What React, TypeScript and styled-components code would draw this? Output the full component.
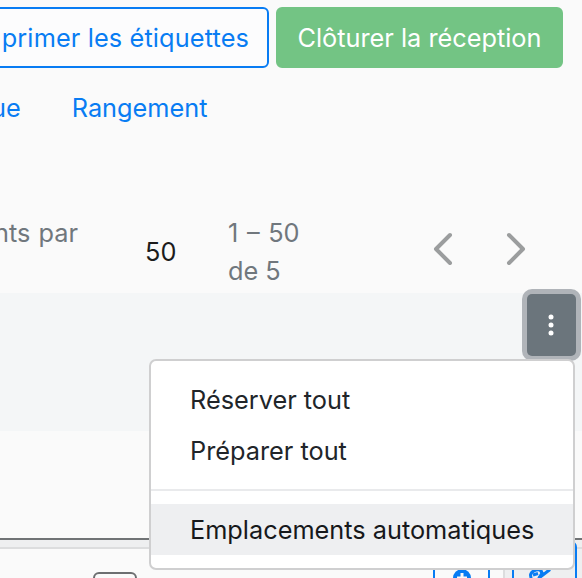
import React from "react";
import styled, { createGlobalStyle } from "styled-components";

const GlobalStyle = createGlobalStyle`
  * { box-sizing: border-box; }
  body { margin: 0; background: #fafafa; }
`;

const Page = styled.main`
  position: relative;
  width: 582px;
  height: 578px;
  overflow: hidden;
  display: flex;
  flex-direction: column;
  background: #fafafa;
  color: #212529;
  font: 430 25.3px/38px Inter, sans-serif;
  white-space: nowrap;
`;

const Actions = styled.header`
  display: flex;
  justify-content: flex-end;
  gap: 7px;
  height: 68px;
  padding: 7px 19px 0 0;
`;

const Button = styled.button<{ $kind: "outline" | "success" }>`
  flex: none;
  display: flex;
  align-items: center;
  justify-content: ${(p) => (p.$kind === "outline" ? "flex-end" : "center")};
  width: ${(p) => (p.$kind === "outline" ? 300 : 287)}px;
  height: 61px;
  padding: 0 ${(p) => (p.$kind === "outline" ? 18 : 0)}px;
  border: 2px solid ${(p) => (p.$kind === "outline" ? "#087cf3" : "#73c484")};
  border-radius: 6px;
  background: ${(p) => (p.$kind === "outline" ? "#fcfcfd" : "#73c484")};
  color: ${(p) => (p.$kind === "outline" ? "#087cf3" : "#fff")};
  font: inherit;
  letter-spacing: ${(p) => (p.$kind === "outline" ? 0.13 : 0)}px;
`;

const Tabs = styled.nav`
  display: flex;
  gap: 51px;
  height: 80px;
  padding-top: 21px;
  margin-left: -9px;
`;

const Tab = styled.a`
  color: #087cf3;
`;

const Pagination = styled.section`
  display: flex;
  height: 145px;
  padding-top: 66px;
  color: #70777d;
`;

const PageLabel = styled.span`
  width: 145px;
  margin-left: -6px;
  word-spacing: 1px;
`;

const PageSize = styled.span`
  width: 83px;
  margin-left: 6px;
  padding-top: 19px;
  color: #1c1c1c;
`;

const PageRange = styled.div`
  width: 204px;
`;

const RangeBounds = styled.div`
  word-spacing: 1.5px;
`;

const Arrows = styled.div`
  display: flex;
  gap: 52px;
  padding-top: 17px;
`;

const TableHead = styled.section`
  position: relative;
  display: flex;
  justify-content: flex-end;
  height: 138px;
  padding-right: 6px;
  background: #f4f6f7;
`;

const MoreButton = styled.button`
  display: flex;
  align-items: center;
  justify-content: center;
  width: 49px;
  height: 62px;
  margin-top: 1px;
  padding: 0 1px 0 0;
  border: 0;
  border-radius: 5px;
  background: #6b757c;
  box-shadow: 0 0 0 5px #b0b4b9;
`;

const Menu = styled.div`
  position: absolute;
  z-index: 2;
  top: 66px;
  right: 7px;
  width: 426px;
  height: 211px;
  padding: 13px 0;
  border: 2px solid #cfcfd0;
  border-radius: 7px;
  background: #fff;
  background-clip: padding-box;
`;

const MenuItem = styled.div<{ $active?: boolean }>`
  height: 51px;
  padding: 7px 39px;
  background: ${(p) => (p.$active ? "#eeeff1" : "transparent")};
  color: ${(p) => (p.$active ? "#16181b" : "#212529")};
`;

const Divider = styled.hr`
  height: 2px;
  margin: 13px 0;
  border: 0;
  background: #e9eaec;
`;

const EmptyRow = styled.div`
  height: 107px;
`;

const Separator = styled.div`
  height: 11px;
  border-top: 2px solid #707375;
  border-bottom: 2px solid #dcddde;
  background: #eeeff0;
`;

const TableRow = styled.div`
  display: flex;
  align-items: flex-start;
  height: 29px;
`;

const Checkbox = styled.span`
  width: 44px;
  height: 44px;
  margin: 23px 296px 0 93px;
  border: 2px solid #6d6f71;
  border-radius: 6px;
`;

const IconButton = styled.span<{ $raised?: boolean }>`
  flex: none;
  display: flex;
  justify-content: center;
  width: ${(p) => (p.$raised ? 65 : 57)}px;
  height: 66px;
  margin-top: -8px;
  padding-top: ${(p) => (p.$raised ? 23 : 26)}px;
  padding-right: ${(p) => (p.$raised ? 8 : 0)}px;
  border: 2px solid #087cf3;
  border-radius: 6px;
`;

const ActionCell = styled.div`
  flex: none;
  width: 79px;
  height: 40px;
  margin-left: 13px;
  padding-left: 7px;
  border-left: 2px solid #dcddde;
  background: #eeeff0;
`;

const Chevron = ({ next = false }: { next?: boolean }) => (
  <svg width="21" height="34" viewBox="0 0 21 34" fill="none" stroke="#9b9d9e" strokeWidth="4" strokeLinecap="round" strokeLinejoin="round">
    <path d={next ? "M4 4 18 18 4 32" : "M18 4 4 18 18 32"} />
  </svg>
);

export default function App() {
  return (
    <>
      <GlobalStyle />
      <Page>
        <Actions>
          <Button $kind="outline">primer les étiquettes</Button>
          <Button $kind="success">Clôturer la réception</Button>
        </Actions>
        <Tabs>
          <Tab>ue</Tab>
          <Tab>Rangement</Tab>
        </Tabs>
        <Pagination>
          <PageLabel>nts par</PageLabel>
          <PageSize>50</PageSize>
          <PageRange>
            <RangeBounds>1 – 50</RangeBounds>
            <div>de 5</div>
          </PageRange>
          <Arrows>
            <Chevron />
            <Chevron next />
          </Arrows>
        </Pagination>
        <TableHead>
          <MoreButton aria-label="Actions">
            <svg width="8" height="24" viewBox="0 0 8 24" fill="#fff">
              <circle cx="4" cy="4" r="2.5" />
              <circle cx="4" cy="12" r="2.5" />
              <circle cx="4" cy="20" r="2.5" />
            </svg>
          </MoreButton>
          <Menu>
            <MenuItem>Réserver tout</MenuItem>
            <MenuItem>Préparer tout</MenuItem>
            <Divider />
            <MenuItem $active>Emplacements automatiques</MenuItem>
          </Menu>
        </TableHead>
        <EmptyRow />
        <Separator />
        <TableRow>
          <Checkbox />
          <IconButton>
            <svg width="18" height="18" viewBox="0 0 18 18">
              <circle cx="9" cy="9" r="9" fill="#087cf3" />
              <path d="M9 4v10M4 9h10" stroke="#fafafa" strokeWidth="3" />
            </svg>
          </IconButton>
          <ActionCell>
            <IconButton $raised>
              <svg width="26" height="22" viewBox="0 0 26 22" fill="none" stroke="#087cf3" strokeWidth="3" strokeLinejoin="round">
                <path d="M2.5 9C3 5.5 8 3 12 4l2 3-3 5 2 6H4Z" />
                <path d="M5 9 10 7.5M11 12 22 3.5M13 4.5 15 9M18 2 24 1.5" />
              </svg>
            </IconButton>
          </ActionCell>
        </TableRow>
      </Page>
    </>
  );
}
